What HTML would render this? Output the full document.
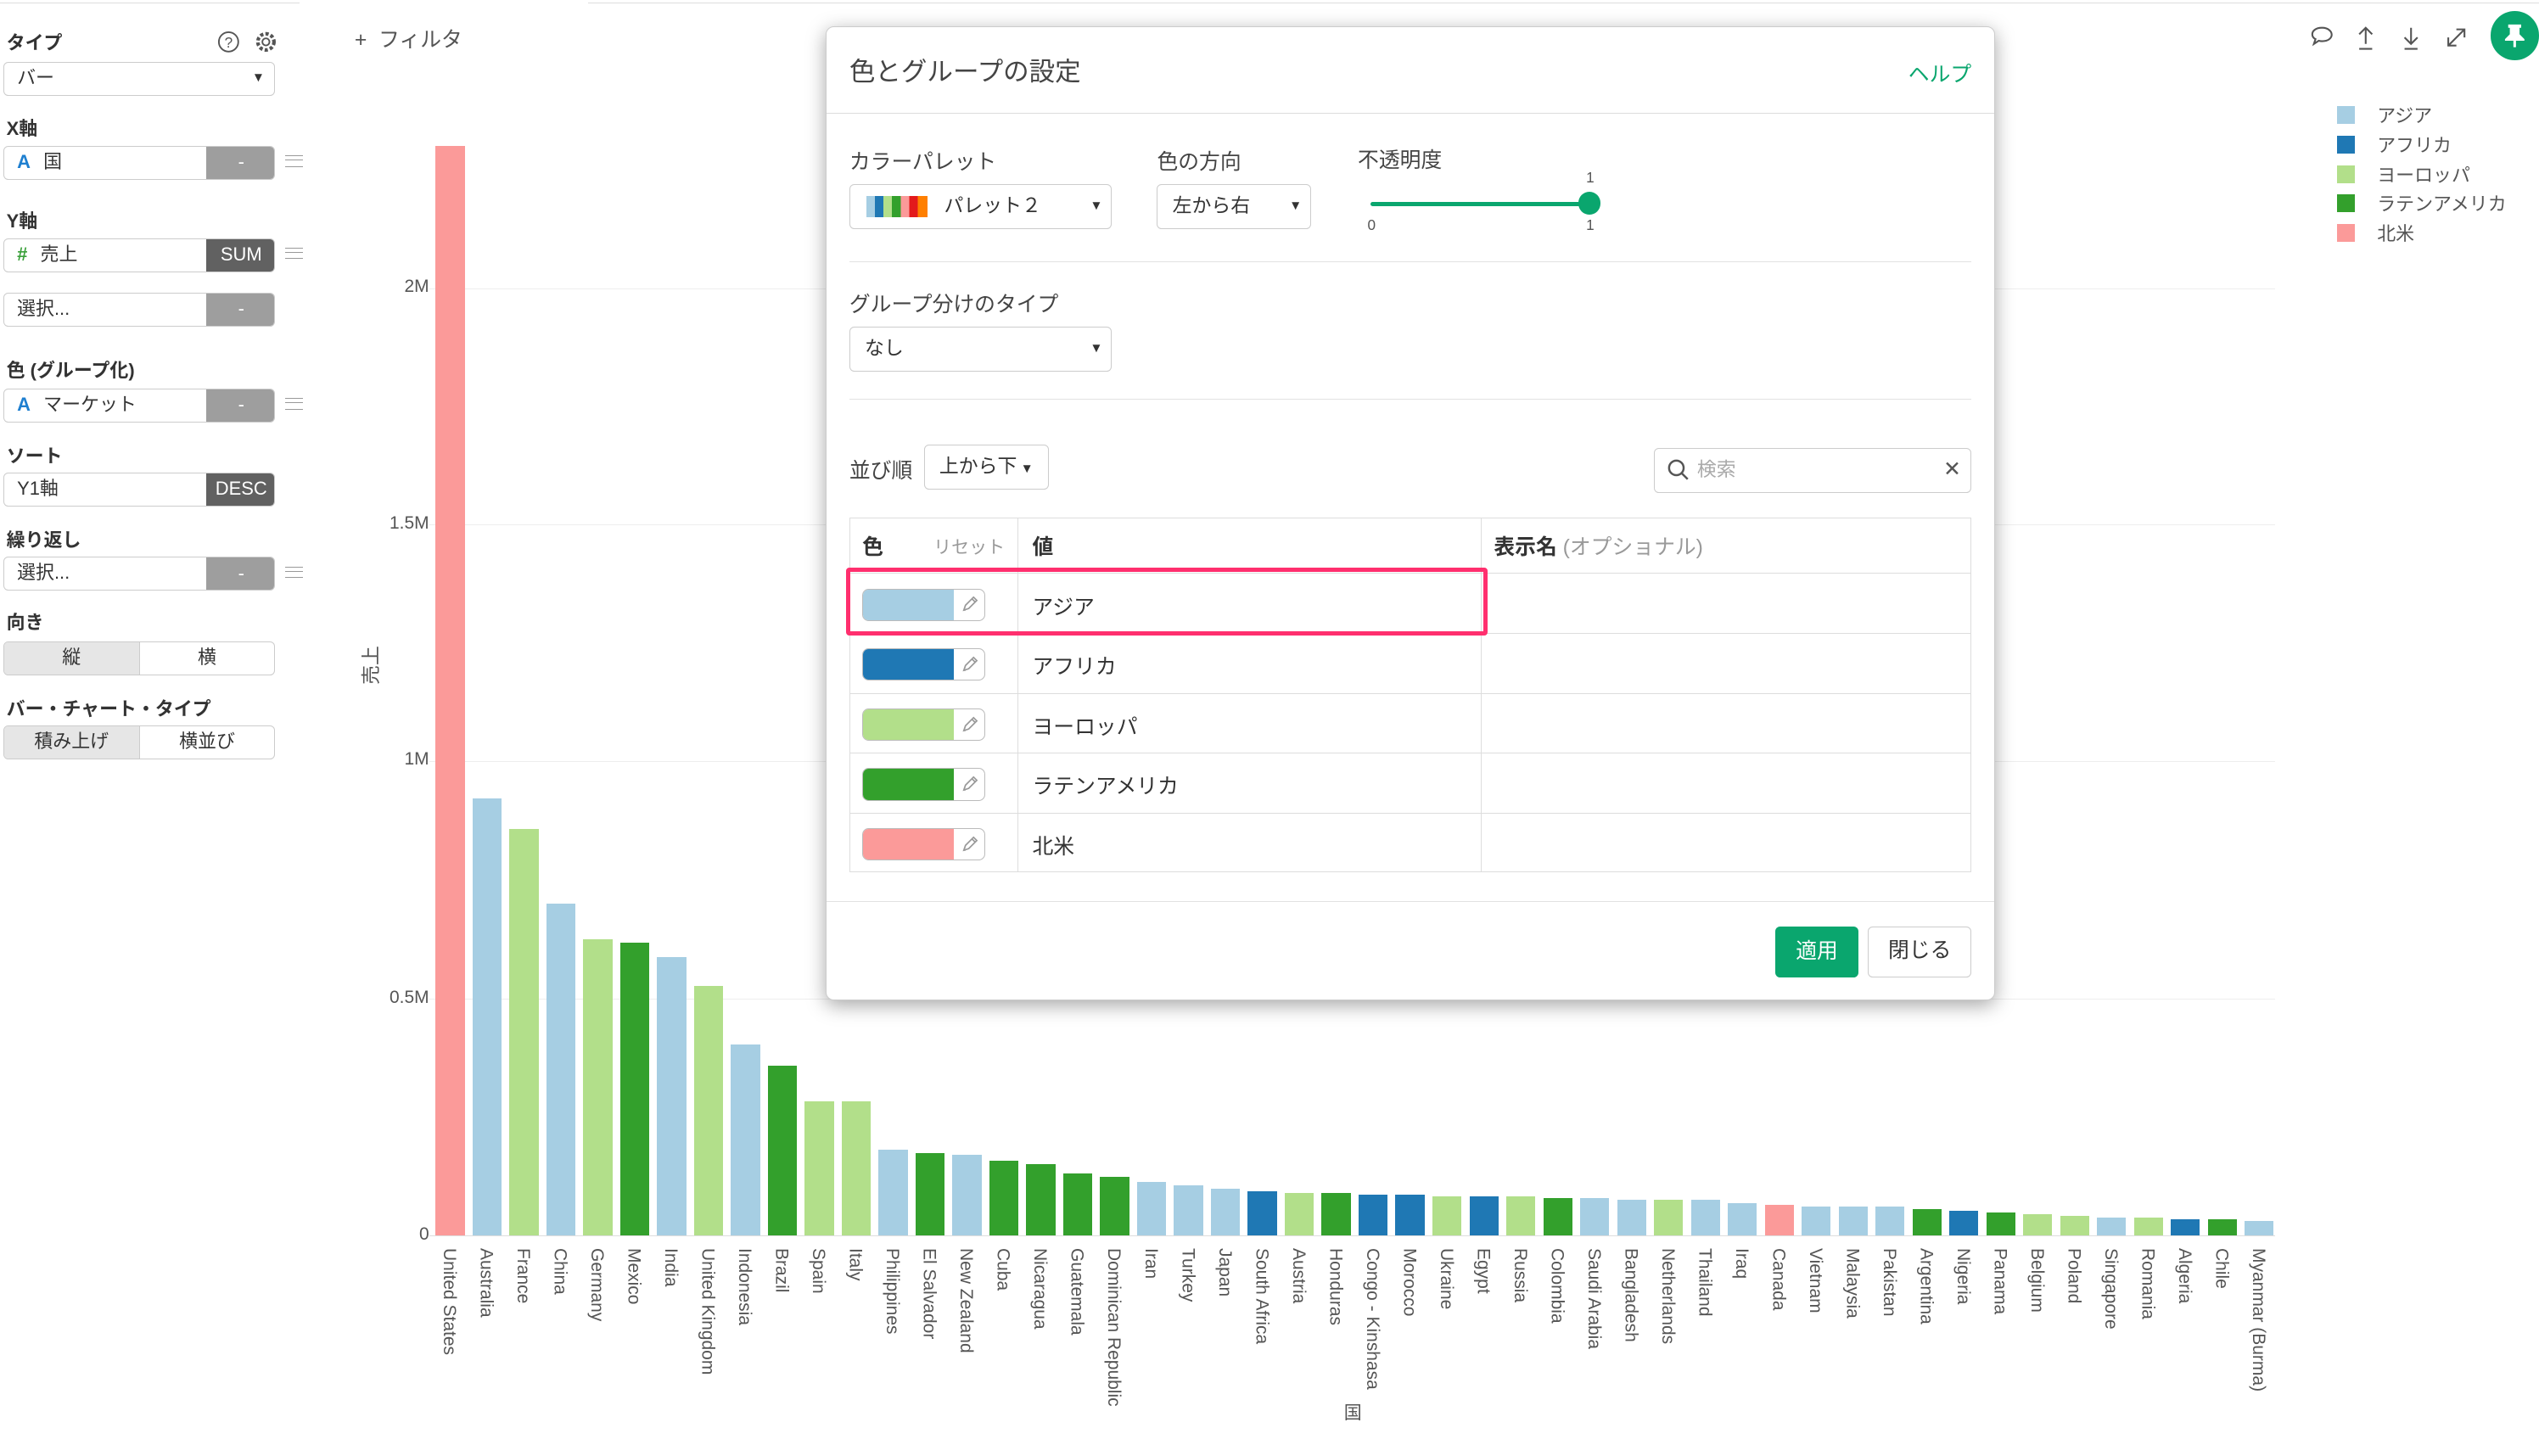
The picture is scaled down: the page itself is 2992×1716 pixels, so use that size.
<!DOCTYPE html>
<html><head><meta charset="utf-8"><style>
*{box-sizing:border-box;margin:0;padding:0}
html,body{width:2992px;height:1716px;overflow:hidden;background:#fff}
#w{zoom:1.9082;width:1568px;height:900px;position:relative;font-family:"Liberation Sans","Noto Sans CJK JP",sans-serif;color:#333;font-size:12px}
.a{position:absolute}
.lbl{font-weight:bold;font-size:11.5px;color:#333}
.inp{position:absolute;left:2px;width:168px;height:21px;border:1px solid #ccc;border-radius:3px;background:#fff;font-size:11.5px;line-height:19px;padding-left:8px;overflow:hidden}
.btn{position:absolute;right:-1px;top:-1px;width:43px;height:21px;background:#9e9e9e;color:#fff;text-align:center;line-height:21px;border-radius:0 3px 3px 0;font-size:11.5px}
.dk{background:#616161}
.hb{position:absolute;left:176px;width:11px;height:7px;border-top:1px solid #999;border-bottom:1px solid #999}
.hb:after{content:"";position:absolute;left:0;right:0;top:2px;border-top:1px solid #999}
.seg{position:absolute;left:2px;width:168px;height:21px;border:1px solid #ccc;border-radius:3px;display:flex;font-size:11.5px;line-height:19px;overflow:hidden}
.seg div{flex:1;text-align:center}
.seg div:first-child{background:#e6e6e6;border-right:1px solid #ccc}
.bar{position:absolute;width:18px}
.xl{position:absolute;top:771px;writing-mode:vertical-rl;font-size:11px;color:#555;white-space:nowrap}
.yl{position:absolute;right:1303px;font-size:11px;color:#555}
.gl{position:absolute;left:265px;width:1140px;border-top:1px solid #eee}
.modal{position:absolute;left:510px;top:16px;width:722px;height:602px;background:#fff;border-radius:5px;box-shadow:0 3px 12px rgba(0,0,0,.35);border:1px solid #ccc}
.sel{position:absolute;height:28px;border:1px solid #ccc;border-radius:3px;font-size:12px;line-height:26px;padding-left:9px;background:#fff}
.sel .c{position:absolute;right:5px;top:0;font-size:8px}
.ml{position:absolute;font-size:13px;color:#444}
.hr{position:absolute;left:14px;right:14px;border-top:1px solid #e2e2e2}
.tr{position:absolute;left:14px;width:693px;height:37px;border-bottom:1px solid #ddd}
.sw{position:absolute;left:8px;top:9px;width:76px;height:20px;border:1px solid #bbb;border-radius:4px;overflow:hidden;background:#fff}
.sw i{position:absolute;left:0;top:0;bottom:0;width:56px}
.sw svg{position:absolute;right:3px;top:3px}
.tv{position:absolute;left:112px;top:10px;font-size:13px;color:#333}
</style></head><body><div id="w">
<div class="a" style="left:0;top:0;width:185px;height:2px;border-bottom:1px solid #ddd"></div>
<div class="a" style="left:363px;top:0;width:1205px;height:2px;border-bottom:1px solid #ddd"></div>
<div class="a lbl" style="left:4px;top:18px">タイプ</div>
<svg class="a" style="left:134px;top:19px" width="14" height="14" viewBox="0 0 14 14"><circle cx="7" cy="7" r="6" fill="none" stroke="#555"/><text x="7" y="10.5" font-size="9" text-anchor="middle" fill="#555">?</text></svg>
<svg class="a" style="left:157px;top:19px" width="14" height="14" viewBox="0 0 14 14"><circle cx="7" cy="7" r="2.2" fill="none" stroke="#555"/><circle cx="7" cy="7" r="5" fill="none" stroke="#555" stroke-dasharray="2 1.3" stroke-width="2.2"/></svg>
<div class="inp" style="top:38px">バー<span style="position:absolute;right:6px;font-size:8px">▼</span></div>
<div class="a lbl" style="left:4px;top:71px">X軸</div>
<div class="inp" style="top:90px"><b style="color:#1e7fd0;margin-right:8px">A</b>国<div class="btn">-</div></div><div class="hb" style="top:96px"></div>
<div class="a lbl" style="left:4px;top:128px">Y軸</div>
<div class="inp" style="top:147px"><b style="color:#3aa03a;margin-right:8px">#</b>売上<div class="btn dk">SUM</div></div><div class="hb" style="top:153px"></div>
<div class="inp" style="top:181px">選択...<div class="btn">-</div></div>
<div class="a lbl" style="left:4px;top:220px">色 (グループ化)</div>
<div class="inp" style="top:240px"><b style="color:#1e7fd0;margin-right:8px">A</b>マーケット<div class="btn">-</div></div><div class="hb" style="top:246px"></div>
<div class="a lbl" style="left:4px;top:273px">ソート</div>
<div class="inp" style="top:292px">Y1軸<div class="btn dk">DESC</div></div>
<div class="a lbl" style="left:4px;top:325px">繰り返し</div>
<div class="inp" style="top:344px">選択...<div class="btn">-</div></div><div class="hb" style="top:350px"></div>
<div class="a lbl" style="left:4px;top:376px">向き</div>
<div class="seg" style="top:396px"><div>縦</div><div>横</div></div>
<div class="a lbl" style="left:4px;top:429px">バー・チャート・タイプ</div>
<div class="seg" style="top:448px"><div>積み上げ</div><div>横並び</div></div>
<div class="a" style="left:219px;top:14px;font-size:13px;color:#555">+ &nbsp;フィルタ</div>
<div class="gl" style="top:178px"></div><div class="gl" style="top:324px"></div><div class="gl" style="top:470px"></div><div class="gl" style="top:617px"></div><div class="gl" style="top:763px;border-color:#ddd"></div>
<div class="yl" style="top:171px">2M</div><div class="yl" style="top:317px">1.5M</div><div class="yl" style="top:463px">1M</div><div class="yl" style="top:610px">0.5M</div><div class="yl" style="top:756px">0</div>
<div class="a" style="left:216px;top:402px;transform:rotate(-90deg);font-size:12px;color:#555">売上</div>
<div class="a" style="left:830px;top:864px;font-size:11px;color:#555">国</div>
<div id="bars"></div>
<script>
var A='#a6cee3',F='#1f78b4',E='#b2df8a',L='#33a02c',N='#fb9a99';
var d=[["United States",90,N],["Australia",493,A],["France",512,E],["China",558,A],["Germany",580,E],["Mexico",582,L],["India",591,A],["United Kingdom",609,E],["Indonesia",645,A],["Brazil",658,L],["Spain",680,E],["Italy",680,E],["Philippines",710,A],["El Salvador",712,L],["New Zealand",713,A],["Cuba",717,L],["Nicaragua",719,L],["Guatemala",725,L],["Dominican Republic",727,L],["Iran",730,A],["Turkey",732,A],["Japan",734,A],["South Africa",736,F],["Austria",737,E],["Honduras",737,L],["Congo - Kinshasa",738,F],["Morocco",738,F],["Ukraine",739,E],["Egypt",739,F],["Russia",739,E],["Colombia",740,L],["Saudi Arabia",740,A],["Bangladesh",741,A],["Netherlands",741,E],["Thailand",741,A],["Iraq",743,A],["Canada",744,N],["Vietnam",745,A],["Malaysia",745,A],["Pakistan",745,A],["Argentina",747,L],["Nigeria",748,F],["Panama",749,L],["Belgium",750,E],["Poland",751,E],["Singapore",752,A],["Romania",752,E],["Algeria",753,F],["Chile",753,L],["Myanmar (Burma)",754,A]];
var h='';d.forEach(function(b,i){var x=269+i*22.8;h+='<div class="bar" style="left:'+x+'px;top:'+b[1]+'px;height:'+(763-b[1])+'px;background:'+b[2]+'"></div><div class="xl" style="left:'+(x+2)+'px">'+b[0]+'</div>';});
document.getElementById('bars').innerHTML=h;
</script>
<svg class="a" style="left:1426px;top:14px" width="120" height="18" viewBox="0 0 120 18" fill="none" stroke="#555" stroke-width="1.1">
<path d="M8 3c-4 0-6 2-6 4 0 1.5 1 2.5 2 3l-1 3 3-2c1 .3 1.5 .3 2 .3 4 0 6-2 6-4s-2-4.3-6-4.3z"/>
<path d="M35 13V3M31 7l4-4 4 4M31 16h8"/>
<path d="M63 3v10M59 9l4 4 4-4M59 16h8"/>
<path d="M86 14l10-10M91 4h5v5M86 9v5h5"/></svg>
<div class="a" style="left:1538px;top:7px;width:30px;height:30px;border-radius:50%;background:#0aa66e"></div>
<svg class="a" style="left:1546px;top:14px" width="14" height="16" viewBox="0 0 14 16" fill="#fff"><path d="M3 1h8v2H10v4l3 3v1H1v-1l3-3V3H3z"/><rect x="6.2" y="11" width="1.6" height="4"/></svg>
<div class="a" style="left:1443px;top:63px;font-size:11.5px;color:#555;line-height:18.2px">
<div><span style="display:inline-block;width:11px;height:11px;background:#a6cee3;margin-right:14px;vertical-align:-1px"></span>アジア</div>
<div><span style="display:inline-block;width:11px;height:11px;background:#1f78b4;margin-right:14px;vertical-align:-1px"></span>アフリカ</div>
<div><span style="display:inline-block;width:11px;height:11px;background:#b2df8a;margin-right:14px;vertical-align:-1px"></span>ヨーロッパ</div>
<div><span style="display:inline-block;width:11px;height:11px;background:#33a02c;margin-right:14px;vertical-align:-1px"></span>ラテンアメリカ</div>
<div><span style="display:inline-block;width:11px;height:11px;background:#fb9a99;margin-right:14px;vertical-align:-1px"></span>北米</div>
</div>
<div class="modal">
<div class="a" style="left:14px;top:15px;font-size:16px;color:#444">色とグループの設定</div>
<div class="a" style="right:14px;top:19px;font-size:13px;color:#0aa66e">ヘルプ</div>
<div class="a" style="left:0;right:0;top:53px;border-top:1px solid #ddd"></div>
<div class="ml" style="left:14px;top:73px">カラーパレット</div>
<div class="ml" style="left:204px;top:73px">色の方向</div>
<div class="ml" style="left:328px;top:72px">不透明度</div>
<div class="sel" style="left:14px;top:97px;width:162px;padding-left:58px">パレット２<span class="c">▼</span>
<div class="a" style="left:10px;top:7px;width:38px;height:13px;background:linear-gradient(90deg,#a6cee3 0 14%,#1f78b4 14% 28%,#b2df8a 28% 42%,#33a02c 42% 56%,#fb9a99 56% 70%,#e31a1c 70% 84%,#ff7f00 84%)"></div></div>
<div class="sel" style="left:204px;top:97px;width:95px">左から右<span class="c">▼</span></div>
<div class="a" style="left:336px;top:108px;width:134px;height:3px;background:#0aa66e;border-radius:2px"></div>
<div class="a" style="left:464px;top:102px;width:14px;height:14px;border-radius:50%;background:#0aa66e"></div>
<div class="a" style="left:469px;top:88px;font-size:9px;color:#555">1</div>
<div class="a" style="left:334px;top:117px;font-size:9px;color:#555">0</div>
<div class="a" style="left:469px;top:117px;font-size:9px;color:#555">1</div>
<div class="hr" style="top:145px"></div>
<div class="ml" style="left:14px;top:161px">グループ分けのタイプ</div>
<div class="sel" style="left:14px;top:185px;width:162px">なし<span class="c">▼</span></div>
<div class="hr" style="top:230px"></div>
<div class="ml" style="left:14px;top:264px">並び順</div>
<div class="sel" style="left:60px;top:258px;width:77px">上から下<span style="font-size:8px"> ▼</span></div>
<div class="sel" style="left:511px;top:260px;width:196px;color:#aaa;padding-left:26px">検索<span class="c" style="font-size:13px;color:#555;right:6px">✕</span>
<svg class="a" style="left:7px;top:6px" width="14" height="14" viewBox="0 0 14 14" fill="none" stroke="#555" stroke-width="1.3"><circle cx="6" cy="6" r="4.5"/><path d="M9.3 9.3L13 13"/></svg></div>
<div class="a" style="left:14px;top:303px;width:693px;height:219px;border:1px solid #ddd"></div>
<div class="a" style="left:118px;top:303px;height:219px;border-left:1px solid #ddd"></div>
<div class="a" style="left:404px;top:303px;height:219px;border-left:1px solid #ddd"></div>
<div class="tr" style="top:303px;height:35px"></div>
<div class="a" style="left:22px;top:311px;font-size:13px;font-weight:bold">色</div>
<div class="a" style="left:66px;top:313px;font-size:11px;color:#999">リセット</div>
<div class="a" style="left:127px;top:311px;font-size:13px;font-weight:bold">値</div>
<div class="a" style="left:412px;top:311px;font-size:13px;font-weight:bold">表示名 <span style="font-weight:normal;color:#999">(オプショナル)</span></div>
<script>
var cs=[['#a6cee3','アジア'],['#1f78b4','アフリカ'],['#b2df8a','ヨーロッパ'],['#33a02c','ラテンアメリカ'],['#fb9a99','北米']];
var s='';cs.forEach(function(c,i){s+='<div class="tr" style="top:'+(338+37*i)+'px'+(i==4?';border:none':'')+'"><div class="sw"><i style="background:'+c[0]+'"></i><svg width="12" height="12" viewBox="0 0 12 12" fill="none" stroke="#999" stroke-width="0.9"><path d="M2 10l1-3 5-5 2 2-5 5zM2 10l1 0M7 3l2 2"/></svg></div><div class="tv" style="left:113px">'+c[1]+'</div></div>';});
document.write(s);
</script>
<div class="a" style="left:12px;top:334px;width:396px;height:42px;border:3px solid #ff2f6e;border-radius:2px"></div>
<div class="a" style="left:0;right:0;top:540px;border-top:1px solid #e2e2e2"></div>
<div class="a" style="left:586px;top:556px;width:51px;height:31px;background:#0aa66e;color:#fff;border-radius:3px;text-align:center;line-height:31px;font-size:13px">適用</div>
<div class="a" style="left:643px;top:556px;width:64px;height:31px;border:1px solid #ccc;border-radius:3px;text-align:center;line-height:29px;font-size:13px">閉じる</div>
</div>
</div></body></html>
